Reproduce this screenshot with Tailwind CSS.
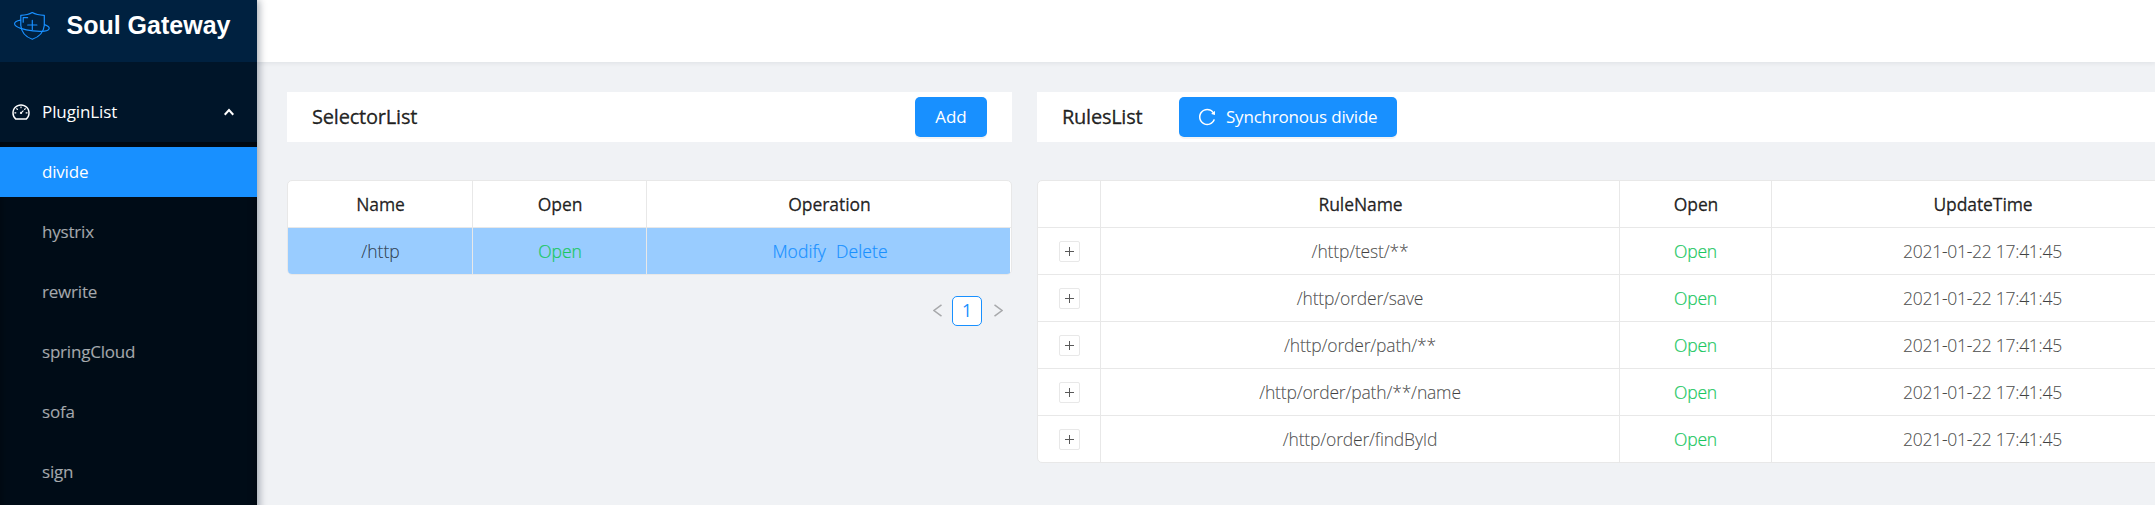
<!DOCTYPE html>
<html lang="en">
<head>
<meta charset="utf-8">
<title>Soul Gateway</title>
<script src="https://cdn.jsdelivr.net/npm/@tailwindcss/browser@4"></script>
</head>
<body class="w-[2155px] h-[505px] overflow-hidden bg-[#f0f2f5] flex font-['Open_Sans','Noto_Sans',sans-serif] text-[17.5px] text-black/65">

<aside class="relative z-10 w-[257px] h-[560px] shrink-0 bg-[#001529] shadow-[2.5px_0_7.5px_rgba(0,21,41,0.35)] flex flex-col">
  <div class="h-[62px] shrink-0 bg-[#002140] flex items-start">
    <svg class="ml-[13px] mt-[11px] w-[38px] h-[30px] shrink-0" viewBox="0 0 38 30" fill="none" stroke="#1890ff" stroke-width="1.2" stroke-linecap="round" stroke-linejoin="round">
      <path d="M19.3 1.6C16.2 3.4 12.3 4.2 7.8 4.3V14.5C8.4 21.2 12.8 26 19.3 28.3C25.8 26 30.6 21.2 31.3 14.5V4.3C26.5 4.2 22.4 3.4 19.3 1.6Z"/>
      <path d="M7.6 9.2C3.2 9.9 1.2 11.3 1.6 13.2C2.4 16.4 11 19 20 19.9C29 20.9 36 20.2 36.2 17.2C36.2 15.8 34.5 14.6 31.5 13.6"/>
      <path d="M10.2 11.2V6.7H14.6M19.3 9.4V18.6M14.7 14H23.9"/>
    </svg>
    <h1 class="ml-[15.5px] h-[50px] leading-[50px] text-[25px] font-bold text-white whitespace-nowrap font-['Liberation_Sans',sans-serif]">Soul Gateway</h1>
  </div>
  <div class="h-20 shrink-0 pt-[25px]">
    <div class="h-[50px] flex items-center text-white text-[17px]">
      <svg class="ml-[11px] size-5 shrink-0" viewBox="0 0 1024 1024" fill="currentColor"><path d="M924.8 385.6a446.7 446.7 0 0 0-96-142.4 446.7 446.7 0 0 0-142.4-96C631.1 123.8 572.5 112 512 112s-119.1 11.8-174.4 35.2a446.7 446.7 0 0 0-142.4 96 446.7 446.7 0 0 0-96 142.4C75.8 440.9 64 499.5 64 560c0 132.7 58.3 257.7 159.9 343.1l1.7 1.4c5.8 4.8 13.1 7.5 20.6 7.5h531.7c7.5 0 14.8-2.7 20.6-7.5l1.7-1.4C901.7 817.7 960 692.7 960 560c0-60.5-11.9-119.1-35.2-174.4zM761.4 836H262.6A371.12 371.12 0 0 1 140 560c0-99.4 38.7-192.8 109-263 70.3-70.3 163.7-109 263-109 99.4 0 192.8 38.7 263 109 70.3 70.3 109 163.7 109 263 0 105.6-44.5 205.5-122.6 276zM623.5 421.5a8.03 8.03 0 0 0-11.3 0L527.7 506c-18.7-5-39.4-.2-54.1 14.5a55.95 55.95 0 0 0 0 79.2 55.95 55.95 0 0 0 79.2 0 55.87 55.87 0 0 0 14.5-54.1l84.5-84.5c3.1-3.1 3.1-8.2 0-11.3l-28.3-28.3zM490 320h44c4.4 0 8-3.6 8-8v-80c0-4.4-3.6-8-8-8h-44c-4.4 0-8 3.6-8 8v80c0 4.4 3.6 8 8 8zm260 218v44c0 4.4 3.6 8 8 8h80c4.4 0 8-3.6 8-8v-44c0-4.4-3.6-8-8-8h-80c-4.4 0-8 3.6-8 8zm12.7-197.2l-31.1-31.1a8.03 8.03 0 0 0-11.3 0l-56.6 56.6a8.03 8.03 0 0 0 0 11.3l31.1 31.1c3.1 3.1 8.2 3.1 11.3 0l56.6-56.6c3.1-3.1 3.1-8.2 0-11.3zm-458.6-31.1a8.03 8.03 0 0 0-11.3 0l-31.1 31.1a8.03 8.03 0 0 0 0 11.3l56.6 56.6c3.1 3.1 8.2 3.1 11.3 0l31.1-31.1c3.1-3.1 3.1-8.2 0-11.3l-56.6-56.6zM262 530h-80c-4.4 0-8 3.6-8 8v44c0 4.4 3.6 8 8 8h80c4.4 0 8-3.6 8-8v-44c0-4.4-3.6-8-8-8z"/></svg>
      <span class="ml-[11px] flex-1 tracking-[-0.1px]">PluginList</span>
      <svg class="mr-[23px] w-[10px] h-2 shrink-0" viewBox="0 0 10 8" fill="none" stroke="currentColor" stroke-width="2.1"><path d="M0.7 6.7L5 2L9.3 6.7"/></svg>
    </div>
  </div>
  <nav class="flex-1 min-h-0 overflow-hidden bg-[#000c17] shadow-[inset_0_2.5px_10px_rgba(0,0,0,0.45)] pt-[5px] flex flex-col gap-2.5 text-[17px] leading-[50px] text-white/65 tracking-[-0.2px]">
    <a class="h-[50px] shrink-0 pl-[42px] bg-[#1890ff] text-white">divide</a>
    <a class="h-[50px] shrink-0 pl-[42px]">hystrix</a>
    <a class="h-[50px] shrink-0 pl-[42px]">rewrite</a>
    <a class="h-[50px] shrink-0 pl-[42px]">springCloud</a>
    <a class="h-[50px] shrink-0 pl-[42px]">sofa</a>
    <a class="h-[50px] shrink-0 pl-[42px]">sign</a>
  </nav>
</aside>

<div class="flex-1 min-w-0 flex flex-col">
  <header class="h-[62px] shrink-0 bg-white shadow-[0_1px_5px_rgba(0,21,41,0.08)]"></header>
  <main class="flex-1 min-h-0 overflow-hidden pt-[30px] pl-[30px] flex items-start gap-[25px]">

    <section class="w-[725px] shrink-0">
      <div class="h-[50px] bg-white pl-[25px] pr-[25px] flex items-center justify-between">
        <h2 class="text-[20px] font-medium text-black/85 tracking-[-0.2px] [-webkit-text-stroke:0.35px]">SelectorList</h2>
        <button class="w-[72px] h-10 rounded-[5px] bg-[#1890ff] text-white text-[17px] shadow-[0_2px_0_rgba(0,0,0,0.045)]">Add</button>
      </div>
      <div class="mt-[38px] h-[95px] rounded-[5px] border border-[#e8e8e8] bg-white overflow-hidden text-center leading-[46px]">
        <div class="h-[47px] grid grid-cols-[185px_174px_364px] border-b border-[#e8e8e8] font-medium text-black/85 tracking-[-0.05px] [-webkit-text-stroke:0.3px]">
          <div class="border-r border-[#e8e8e8] pl-px">Name</div>
          <div class="border-r border-[#e8e8e8] pl-px">Open</div>
          <div class="pl-px">Operation</div>
        </div>
        <div class="h-[46px] w-[722px] grid grid-cols-[185px_174px_363px] bg-[#99ccff] font-light [-webkit-text-stroke:0.2px]">
          <div class="border-r border-[#e8e8e8] pl-px">/http</div>
          <div class="border-r border-[#e8e8e8] pl-px text-[#1ac75f]">Open</div>
          <div class="flex justify-center gap-2.5 pl-[3px] text-[#1890ff] tracking-[0.1px]"><a>Modify</a><a>Delete</a></div>
        </div>
      </div>
      <div class="mt-5 h-[31px] pr-[9px] flex items-center justify-end text-black/30">
        <svg class="w-[9px] h-[13px]" viewBox="0 0 9 13" fill="none" stroke="currentColor" stroke-width="1.5"><path d="M8.5 0.8L1 6.5L8.5 12.2"/></svg>
        <span class="ml-2.5 mr-3 size-[30px] rounded-[5px] border border-[#1890ff] bg-white text-center leading-[26px] text-[#1890ff]">1</span>
        <svg class="w-[9px] h-[13px]" viewBox="0 0 9 13" fill="none" stroke="currentColor" stroke-width="1.5"><path d="M0.5 0.8L8 6.5L0.5 12.2"/></svg>
      </div>
    </section>

    <section class="w-[1200px] shrink-0">
      <div class="h-[50px] bg-white pl-[25px] flex items-center">
        <h2 class="w-[117px] text-[20px] font-medium text-black/85 tracking-[-0.25px] [-webkit-text-stroke:0.35px]">RulesList</h2>
        <button class="w-[218px] h-10 pl-[18px] rounded-[5px] bg-[#1890ff] text-white text-[17px] tracking-[-0.2px] shadow-[0_2px_0_rgba(0,0,0,0.045)] flex items-center gap-[9px] whitespace-nowrap">
          <svg class="size-5 shrink-0" viewBox="0 0 1024 1024" fill="currentColor"><path d="M909.1 209.3l-56.4 44.1C775.8 155.1 656.2 92 521.9 92 290 92 102.3 279.5 102 511.5 101.7 743.7 289.8 932 521.9 932c181.3 0 335.8-115 394.6-276.1 1.5-4.2-.7-8.9-4.9-10.3l-56.7-19.5a8 8 0 0 0-10.1 4.8c-1.8 5-3.8 10-5.9 14.9-17.3 41-42.1 77.8-73.7 109.4A344.77 344.77 0 0 1 655.9 829c-42.3 17.9-87.4 27-133.8 27-46.5 0-91.5-9.1-133.8-27A341.5 341.5 0 0 1 279 755.2a342.16 342.16 0 0 1-73.7-109.4c-17.9-42.4-27-87.4-27-133.9s9.1-91.5 27-133.9c17.3-41 42.1-77.8 73.7-109.4 31.6-31.6 68.4-56.4 109.3-73.8 42.3-17.9 87.4-27 133.8-27 46.5 0 91.5 9.1 133.8 27a341.5 341.5 0 0 1 109.3 73.8c9.9 9.9 19.2 20.4 27.8 31.4l-60.2 47a8 8 0 0 0 3 14.1l175.6 43c5 1.2 9.9-2.6 9.9-7.7l.8-180.9c-.1-6.6-7.8-10.3-13-6.2z"/></svg>
          <span>Synchronous divide</span>
        </button>
      </div>
      <div class="mt-[38px] rounded-[5px] border border-[#e8e8e8] bg-white overflow-hidden text-center leading-[46px]">
        <div class="h-[47px] grid grid-cols-[63px_519px_152px_422px_1fr] divide-x divide-[#e8e8e8] border-b border-[#e8e8e8] font-medium text-black/85 tracking-[-0.08px] [-webkit-text-stroke:0.3px]">
          <div></div><div class="pl-px">RuleName</div><div class="pl-px">Open</div><div class="pl-px">UpdateTime</div><div></div>
        </div>
        <div id="rules" class="font-light divide-y divide-[#e8e8e8] tracking-[-0.18px] [-webkit-text-stroke:0.2px]"></div>
      </div>
    </section>
  </main>
</div>

<template id="rule">
  <div class="grid grid-cols-[63px_519px_152px_422px_1fr] divide-x divide-[#e8e8e8]">
    <div class="h-[46px] flex items-center justify-center pt-px"><span class="size-[21px] rounded-[2px] border border-[#e8e8e8] flex items-center justify-center"><svg class="size-[9px]" viewBox="0 0 9 9" stroke="#595959" stroke-width="1"><path d="M4.5 0V9M0 4.5H9"/></svg></span></div>
    <div data-name></div>
    <div class="text-[#1ac75f]">Open</div>
    <div class="tracking-[-0.27px]">2021-01-22 17:41:45</div>
    <div></div>
  </div>
</template>
<script>
  const names = ['/http/test/**', '/http/order/save', '/http/order/path/**', '/http/order/path/**/name', '/http/order/findById'];
  for (const name of names) {
    const row = document.getElementById('rule').content.cloneNode(true);
    row.querySelector('[data-name]').textContent = name;
    document.getElementById('rules').append(row);
  }
</script>
</body>
</html>
